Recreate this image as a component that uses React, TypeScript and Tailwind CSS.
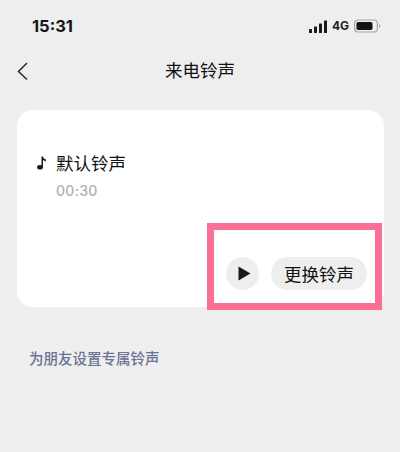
const cjk = { fontFamily: '"Noto Sans CJK SC", "Liberation Sans", sans-serif' };

function StatusBar() {
  return (
    <div className="flex h-[52px] items-center justify-between pl-[32px] pr-[19px]">
      <span className="text-[16.5px] font-bold text-[#151515] font-['Inter',sans-serif]">15:31</span>
      <div className="flex items-center gap-[5px]">
        <svg width="18" height="13" viewBox="0 0 18 13" fill="#1a1a1a">
          <rect x="0" y="9" width="3" height="4" rx="0.6" />
          <rect x="5" y="6.5" width="3" height="6.5" rx="0.6" />
          <rect x="10" y="3.5" width="3" height="9.5" rx="0.6" />
          <rect x="15" y="0.5" width="3" height="12.5" rx="0.6" />
        </svg>
        <span className="text-[12px] font-bold leading-none text-[#222] font-['Inter',sans-serif]">4G</span>
        <svg width="27" height="14" viewBox="0 0 27 14">
          <rect x="0.6" y="1" width="22.8" height="12" rx="3.5" fill="none" stroke="#a5a5a5" strokeWidth="1.2" />
          <rect x="2.5" y="3" width="16" height="8" rx="1.8" fill="#111" />
          <rect x="25" y="5.5" width="1.2" height="3" rx="0.6" fill="#999" />
        </svg>
      </div>
    </div>
  );
}

function NavBar() {
  return (
    <div className="relative flex h-[36px] items-center justify-center">
      <svg className="absolute left-[16px] top-[9px]" width="13" height="20" viewBox="0 0 13 20" fill="none" stroke="#2a2a2a" strokeWidth="1.5">
        <path d="M11 2 L2.5 10.5 L11 18.5" />
      </svg>
      <span className="text-[17.5px] leading-none text-[#111]" style={cjk}>来电铃声</span>
    </div>
  );
}

function RingtoneCard() {
  return (
    <div className="relative mx-[17px] mt-[22px] flex h-[197px] w-[367px] flex-col justify-between rounded-[16px] bg-white pl-[20px] pr-[17px] pt-[43px] pb-[17px]">
      <div>
        <div className="flex items-center gap-[10px]">
          <svg width="9" height="14" viewBox="0 0 9 14" fill="#1a1a1a">
            <ellipse cx="3" cy="11.3" rx="2.9" ry="2.3" />
            <path d="M4.5 0.5 H6 C6.2 2.2 7.2 3 8.8 3.3 V5.4 C7.6 5.2 6.6 4.8 6 4.1 V11.5 H4.5 Z" />
          </svg>
          <span className="text-[17.5px] leading-[20px] text-[#111]" style={cjk}>默认铃声</span>
        </div>
        <div className="mt-[9px] pl-[19px] text-[14px] font-medium leading-[17px] tracking-[0.3px] text-[#b0b0b0] font-['Inter',sans-serif]">00:30</div>
      </div>
      <div className="flex items-center justify-end gap-[12px]">
        <div className="flex size-[33px] items-center justify-center rounded-full bg-[#eeeeee] pl-[3px]">
          <svg width="13" height="15" viewBox="0 0 13 15" fill="#1a1a1a">
            <path d="M0.5 0.5 L12.5 7.5 L0.5 14.5 Z" />
          </svg>
        </div>
        <div className="flex h-[33px] w-[96px] items-center justify-center rounded-full bg-[#eeeeee]">
          <span className="text-[17.5px] leading-none text-[#111]" style={cjk}>更换铃声</span>
        </div>
      </div>
      {/* pink highlight drawn over the screenshot */}
      <div className="absolute left-[190px] top-[113px] h-[87px] w-[175px] border-[7px] border-[#fb6f96]" />
    </div>
  );
}

export default function App() {
  return (
    <div className="h-[452px] w-[400px] overflow-hidden bg-[#eeeeee]">
      <StatusBar />
      <NavBar />
      <RingtoneCard />
      <div className="mt-[42px] pl-[29px] text-[14.5px] font-medium leading-[18px] text-[#6a7494]" style={cjk}>
        为朋友设置专属铃声
      </div>
    </div>
  );
}
